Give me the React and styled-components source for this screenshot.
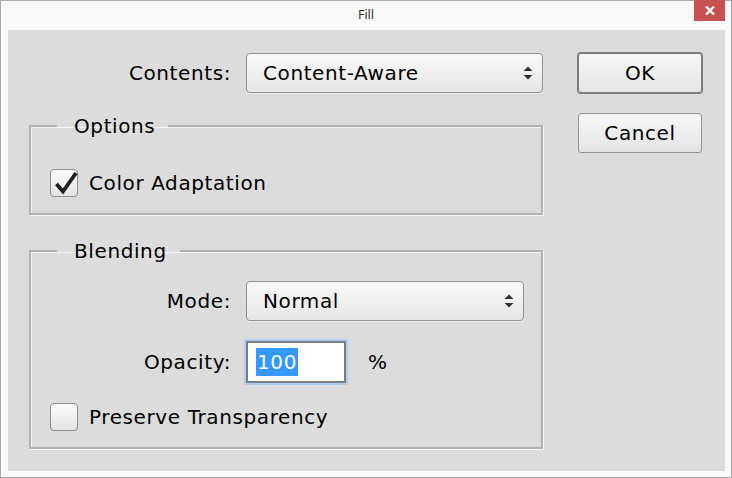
import styled, { createGlobalStyle } from "styled-components";

const GlobalStyle = createGlobalStyle`
  html, body {
    margin: 0;
    padding: 0;
    background: #f9f9f9;
  }
  body {
    font-family: "DejaVu Sans", "Liberation Sans", sans-serif;
    color: #000;
  }
`;

const Window = styled.div`
  box-sizing: border-box;
  width: 732px;
  height: 478px;
  border: 1px solid #ababab;
  background: #f9f9f9;
  display: flex;
  flex-direction: column;
`;

const TitleBar = styled.div`
  height: 29px;
  display: grid;
  grid-template-columns: 1fr auto 1fr;
  align-items: start;
`;

const Title = styled.div`
  grid-column: 2;
  font-family: "Noto Sans", "Liberation Sans", sans-serif;
  font-size: 12.5px;
  line-height: 28px;
  color: #333;
`;

const CloseButton = styled.button`
  justify-self: end;
  margin: -1px 6px 0 0;
  width: 31px;
  height: 21px;
  padding: 0;
  border: 0;
  background: #c75050;
  display: flex;
  align-items: center;
  justify-content: center;
`;

const Client = styled.div`
  flex: 1;
  margin: 0 6px 6px 7px;
  background: #dcdcdc;
  padding: 23px 0 0 21px;
  display: grid;
  grid-template-columns: 514px 124px;
  column-gap: 35px;
  align-items: start;
  font-size: 20px;
  letter-spacing: 0.6px;
`;

const LeftColumn = styled.div`
  display: flex;
  flex-direction: column;
`;

const ButtonColumn = styled.div`
  display: flex;
  flex-direction: column;
  gap: 20px;
`;

const Button = styled.button`
  box-sizing: border-box;
  width: 124px;
  height: 40px;
  padding: 0;
  font-family: inherit;
  font-size: 20px;
  letter-spacing: 0.6px;
  color: #000;
  border: 1px solid ${(p) => (p.$default ? "#7c7c7c" : "#939393")};
  border-radius: 3px;
  background: linear-gradient(#f7f7f7, #e5e5e5);
  box-shadow: ${(p) => (p.$default ? "0 0 0 1px #7c7c7c" : "none")};
`;

const FieldRow = styled.div`
  display: flex;
  align-items: center;
  gap: ${(p) => p.$gap || 15}px;
`;

const Label = styled.span`
  width: ${(p) => p.$width}px;
  text-align: right;
  white-space: nowrap;
`;

const Unit = styled.span`
  margin-left: 7px;
`;

const Select = styled.div`
  box-sizing: border-box;
  width: ${(p) => p.$width}px;
  height: 40px;
  padding: 0 9px 0 16px;
  border: 1px solid #939393;
  border-radius: 4px;
  background: linear-gradient(#f9f9f9, #e6e6e6);
  box-shadow: 0 1px 1px #ebebeb;
  display: flex;
  align-items: center;
  justify-content: space-between;
`;

const Group = styled.fieldset`
  margin: ${(p) => p.$top}px 0 0;
  padding: ${(p) => p.$padTop}px 0 16px 0;
  border: 2px solid #b2b2b2;
  box-shadow: inset 1px 1px 0 #f4f4f4, 1px 1px 0 #fafafa;
  min-width: 0;
`;

const Legend = styled.legend`
  margin-left: 26px;
  padding: 0 13px 0 17px;
  line-height: 24px;
  font-size: 20px;
`;

const Stack = styled.div`
  display: flex;
  flex-direction: column;
  gap: 20px;
`;

const CheckRow = styled.label`
  display: flex;
  align-items: center;
  gap: 11px;
  padding-left: 19px;
  height: 28px;
`;

const CheckBox = styled.span`
  box-sizing: border-box;
  position: relative;
  width: 28px;
  height: 28px;
  border: 1px solid #8e8e8e;
  border-radius: 4px;
  background: linear-gradient(#fbfbfb, #e4e4e4);
  flex: none;
`;

const CheckMark = styled.svg`
  position: absolute;
  left: 0;
  top: 0;
  overflow: visible;
`;

const TextField = styled.div`
  box-sizing: border-box;
  width: 100px;
  height: 42px;
  padding: 0 8px;
  border: 2px solid #7d7d7d;
  background: #fff;
  box-shadow: 0 0 0 2px #abcdf0;
  display: flex;
  align-items: center;
`;

const Selected = styled.span`
  display: inline-block;
  line-height: 28px;
  padding: 0 1px;
  background: #3399ff;
  color: #fff;
`;

const Arrows = () => (
  <svg width="10" height="14" viewBox="0 0 10 14">
    <path d="M0.5 5 L5 0.5 L9.5 5 Z" fill="#333" />
    <path d="M0.5 9 L9.5 9 L5 13.5 Z" fill="#333" />
  </svg>
);

const Check = ({ checked }) => (
  <CheckBox>
    {checked && (
      <CheckMark width="28" height="28" viewBox="0 0 28 28">
        <path
          d="M5.5 14 L12 21.5 L25 3"
          fill="none"
          stroke="#1f1f1f"
          strokeWidth="3.8"
          strokeLinejoin="miter"
        />
      </CheckMark>
    )}
  </CheckBox>
);

export default function App() {
  return (
    <>
      <GlobalStyle />
      <Window>
        <TitleBar>
          <Title>Fill</Title>
          <CloseButton aria-label="Close">
            <svg width="10" height="9" viewBox="0 0 10 9">
              <path d="M1 0.5 L9 8.5 M9 0.5 L1 8.5" stroke="#fff" strokeWidth="2.4" />
            </svg>
          </CloseButton>
        </TitleBar>

        <Client>
          <LeftColumn>
            <FieldRow>
              <Label $width={202}>Contents:</Label>
              <Select $width={297}>
                <span>Content-Aware</span>
                <Arrows />
              </Select>
            </FieldRow>

            <Group $top={21} $padTop={31}>
              <Legend>Options</Legend>
              <CheckRow>
                <Check checked />
                Color Adaptation
              </CheckRow>
            </Group>

            <Group $top={24} $padTop={18}>
              <Legend>Blending</Legend>
              <Stack>
                <FieldRow>
                  <Label $width={200}>Mode:</Label>
                  <Select $width={278}>
                    <span>Normal</span>
                    <Arrows />
                  </Select>
                </FieldRow>
                <FieldRow>
                  <Label $width={200}>Opacity:</Label>
                  <TextField>
                    <Selected>100</Selected>
                  </TextField>
                  <Unit>%</Unit>
                </FieldRow>
                <CheckRow>
                  <Check />
                  Preserve Transparency
                </CheckRow>
              </Stack>
            </Group>
          </LeftColumn>

          <ButtonColumn>
            <Button $default>OK</Button>
            <Button>Cancel</Button>
          </ButtonColumn>
        </Client>
      </Window>
    </>
  );
}
